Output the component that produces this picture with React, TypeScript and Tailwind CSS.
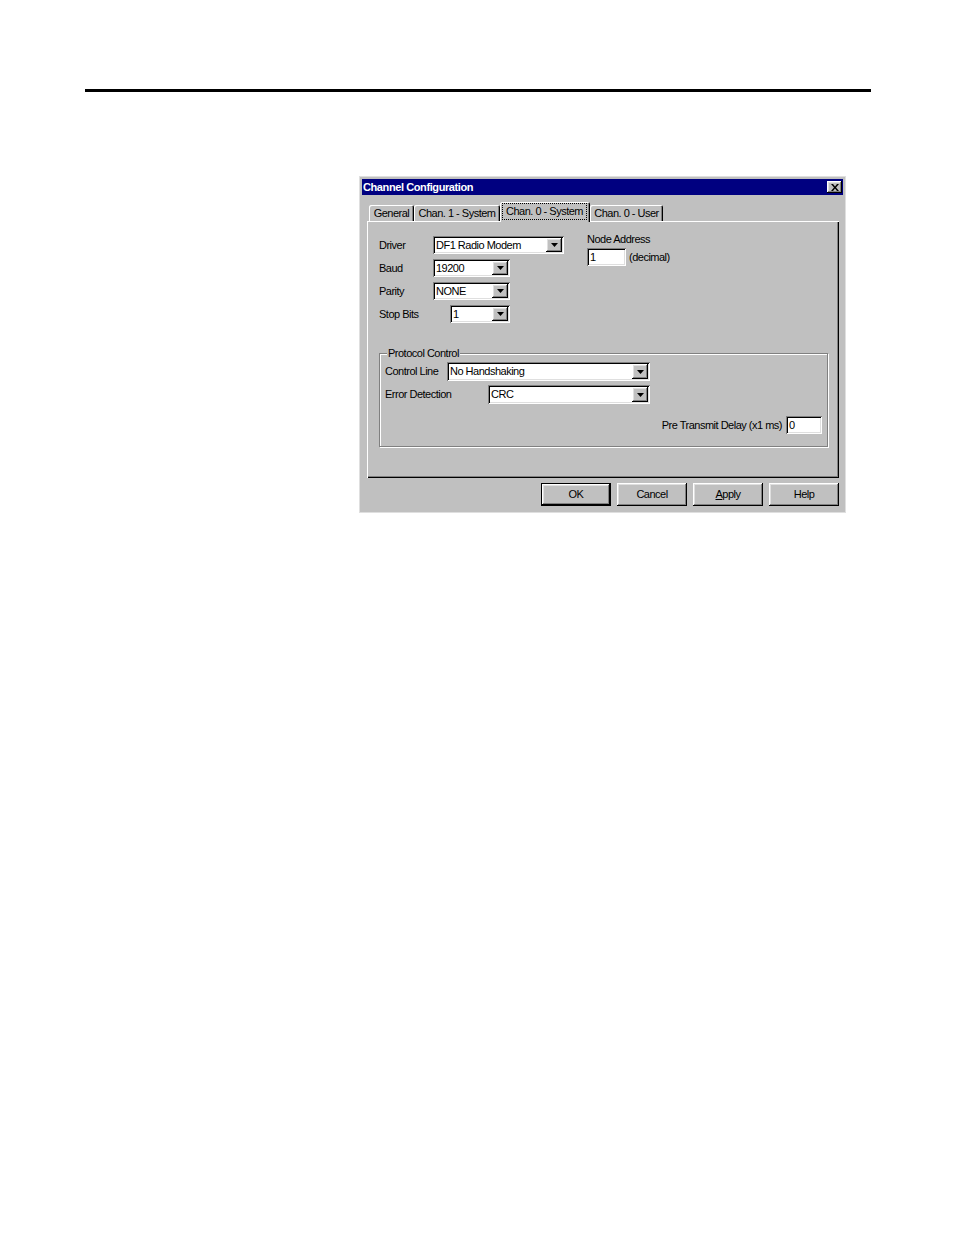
import React from "react";

// Win95 style bevels
const raised =
  "shadow-[inset_-1px_-1px_#000,inset_1px_1px_#fff,inset_-2px_-2px_#808080,inset_2px_2px_#dfdfdf]";
const sunken =
  "shadow-[inset_1px_1px_#808080,inset_-1px_-1px_#fff,inset_2px_2px_#000,inset_-2px_-2px_#dfdfdf]";

function Arrow() {
  return (
    <svg width="7" height="4" viewBox="0 0 7 4">
      <path d="M0 0h7L3.5 4z" fill="#000" />
    </svg>
  );
}

function Combo({ value, className }: { value: string; className: string }) {
  return (
    <div className={`flex items-stretch bg-white p-[2px] ${sunken} ${className}`}>
      <span className="flex flex-1 items-center pl-[1px] leading-none">{value}</span>
      <span className={`flex w-[16px] items-center justify-center bg-[#c0c0c0] ${raised}`}>
        <Arrow />
      </span>
    </div>
  );
}

function Field({ value, className }: { value: string; className: string }) {
  return (
    <div className={`flex items-center bg-white pl-[3px] leading-none ${sunken} ${className}`}>
      {value}
    </div>
  );
}

function Tab({ label, width }: { label: string; width: string }) {
  return (
    <div
      className={`flex h-[16px] items-center justify-center rounded-t-[2px] shadow-[inset_1px_1px_#fff,inset_-1px_0_#000,inset_-2px_0_#808080] ${width}`}
    >
      {label}
    </div>
  );
}

function Button({ children, primary }: { children: React.ReactNode; primary?: boolean }) {
  return (
    <div className={`h-[23px] w-[70px] ${primary ? "border border-black" : ""}`}>
      <div className={`flex h-full w-full items-center justify-center ${raised}`}>{children}</div>
    </div>
  );
}

export default function App() {
  return (
    <div className="min-h-[1235px] bg-white font-['Liberation_Sans',Arial,sans-serif] text-[11px] tracking-[-0.5px] text-black">
      <div className="pl-[85px] pt-[89px]">
        <div className="h-[3px] w-[786px] bg-black" />
      </div>

      {/* dialog */}
      <div className="ml-[359px] mt-[84px] h-[337px] w-[487px] border border-[#dfdfdf] bg-[#c0c0c0] p-[2px]">
        <div className="flex h-[16px] items-center justify-between bg-[#000080] pl-[1px] pr-[1px]">
          <span className="font-bold tracking-[-0.4px] text-white">Channel Configuration</span>
          <div className={`flex h-[12px] w-[15px] items-center justify-center bg-[#c0c0c0] ${raised}`}>
            <svg width="8" height="7" viewBox="0 0 8 7">
              <path d="M0 0h2l2 2.5L6 0h2L5 3.5 8 7H6L4 4.5 2 7H0l3-3.5z" fill="#000" />
            </svg>
          </div>
        </div>

        {/* tabs */}
        <div className="mt-[7px] flex h-[19px] items-end pl-[7px]">
          <Tab label="General" width="w-[45px]" />
          <Tab label="Chan. 1 - System" width="w-[86px]" />
          <div className="relative z-10 -mb-[1px] flex h-[20px] w-[90px] rounded-t-[2px] bg-[#c0c0c0] pb-[2px] pl-[2px] pr-[3px] pt-[1px] shadow-[inset_1px_1px_#fff,inset_-1px_0_#000,inset_-2px_0_#808080]">
            <div className="flex flex-1 items-center justify-center border border-dotted border-black">
              Chan. 0 - System
            </div>
          </div>
          <Tab label="Chan. 0 - User" width="w-[73px]" />
        </div>

        {/* tab panel */}
        <div className="ml-[5px] h-[257px] w-[472px] pl-[12px] pr-[11px] pt-[15px] shadow-[inset_1px_1px_#fff,inset_-1px_-1px_#000,inset_-2px_-2px_#808080]">
          <div className="flex">
            <div className="flex w-[208px] flex-col gap-[5px]">
              <div className="flex h-[18px] items-center">
                <span className="w-[54px]">Driver</span>
                <Combo value="DF1 Radio Modem" className="h-[18px] w-[131px]" />
              </div>
              <div className="flex h-[18px] items-center">
                <span className="w-[54px]">Baud</span>
                <Combo value="19200" className="h-[18px] w-[77px]" />
              </div>
              <div className="flex h-[18px] items-center">
                <span className="w-[54px]">Parity</span>
                <Combo value="NONE" className="h-[18px] w-[77px]" />
              </div>
              <div className="flex h-[18px] items-center">
                <span className="w-[71px]">Stop Bits</span>
                <Combo value="1" className="h-[18px] w-[60px]" />
              </div>
            </div>
            <div className="-mt-[3px] flex flex-col">
              <span className="leading-[13px]">Node Address</span>
              <div className="mt-[2px] flex items-center">
                <Field value="1" className="h-[18px] w-[39px]" />
                <span className="ml-[3px]">(decimal)</span>
              </div>
            </div>
          </div>

          {/* group box */}
          <div className="relative mt-[30px] h-[94px] w-[449px] border border-[#808080] pl-[5px] pr-[5px] pt-[8px] shadow-[1px_1px_0_#fff,inset_1px_1px_0_#fff]">
            <span className="absolute -top-[7px] left-[7px] bg-[#c0c0c0] px-[1px] leading-[13px]">
              Protocol Control
            </span>
            <div className="flex h-[19px] items-center">
              <span className="w-[62px]">Control Line</span>
              <Combo value="No Handshaking" className="h-[19px] w-[203px]" />
            </div>
            <div className="mt-[4px] flex h-[19px] items-center">
              <span className="w-[103px]">Error Detection</span>
              <Combo value="CRC" className="h-[19px] w-[162px]" />
            </div>
            <div className="mt-[12px] flex h-[18px] items-center justify-end">
              <span>Pre Transmit Delay (x1 ms)</span>
              <Field value="0" className="ml-[4px] h-[18px] w-[36px]" />
            </div>
          </div>
        </div>

        {/* buttons */}
        <div className="ml-[5px] mt-[5px] flex w-[472px] justify-end gap-[6px]">
          <Button primary>OK</Button>
          <Button>Cancel</Button>
          <Button>
            <span>
              <span className="underline">A</span>pply
            </span>
          </Button>
          <Button>Help</Button>
        </div>
      </div>
    </div>
  );
}
